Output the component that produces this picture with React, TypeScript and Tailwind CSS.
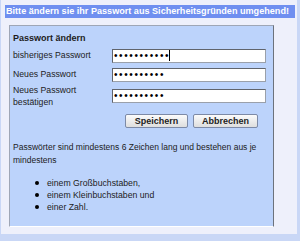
import React from 'react';

const font = { fontFamily: '"Liberation Sans", Arial, sans-serif' };

const PasswordField: React.FC<{ count: number; caret?: boolean }> = ({ count, caret }) => (
  <div
    role="textbox"
    className="flex h-[14px] w-[154px] items-center border border-[#9aa0aa] border-t-[#60646c] border-l-[#60646c] bg-white pl-[1px] text-[10px] leading-none tracking-[1.6px] text-black"
  >
    <span>{'•'.repeat(count)}</span>
    {caret && <span className="ml-[-1px] h-[11px] w-px bg-black" />}
  </div>
);

const App: React.FC = () => {
  const rules = ['einem Großbuchstaben,', 'einem Kleinbuchstaben und', 'einer Zahl.'];

  return (
    <div className="h-[241px] w-[300px] bg-[#c9d7f6] pl-[1px]" style={font}>
      <div className="flex h-[234px] w-[296px] flex-col bg-[#eef0fb] pt-[5px] pl-[4px] pr-[2px]">
        {/* Hinweis */}
        <div className="flex h-[13px] items-center whitespace-nowrap bg-[#6f8ff0] pl-[1px] text-[9.1px] font-bold leading-none text-white">
          Bitte ändern sie ihr Passwort aus Sicherheitsgründen umgehend!
        </div>

        <div className="mt-[7px] ml-[4px] h-[202px] w-[265px] border border-[#9ea6b6] border-r-[#6c727c] border-b-white bg-[#bcd3fb] pl-[3px] pt-[6px] text-[8.7px] text-[#1c1c1c]">
          <div className="text-[9px] font-bold leading-[12px]">Passwort ändern</div>

          <div className="mt-[2px] flex flex-col">
            <div className="flex h-[19px] items-center">
              <label className="w-[99px]">bisheriges Passwort</label>
              <PasswordField count={11} caret />
            </div>
            <div className="flex h-[19px] items-center">
              <label className="w-[99px]">Neues Passwort</label>
              <PasswordField count={10} />
            </div>
            <div className="flex h-[24px] items-center">
              <label className="w-[99px] leading-[12px]">
                Neues Passwort
                <br />
                bestätigen
              </label>
              <PasswordField count={10} />
            </div>
          </div>

          <div className="mt-[6px] flex gap-[5px] pl-[112px]">
            <button className="h-[14px] w-[63px] rounded-[2px] border border-[#7d8aa6] bg-gradient-to-b from-[#fbfbfb] to-[#dedede] text-[9px] font-bold leading-none text-[#222]">
              Speichern
            </button>
            <button className="h-[14px] w-[65px] rounded-[2px] border border-[#7d8aa6] bg-gradient-to-b from-[#fbfbfb] to-[#dedede] text-[9px] font-bold leading-none text-[#222]">
              Abbrechen
            </button>
          </div>

          <p className="mt-[13px] pr-[4px] text-[8.5px] leading-[13px]">
            Passwörter sind mindestens 6 Zeichen lang und bestehen aus je mindestens
          </p>

          <ul className="mt-[10px] flex flex-col pl-[22px]">
            {rules.map((r) => (
              <li key={r} className="flex items-center leading-[12px]">
                <span className="mr-[8px] h-[4px] w-[4px] rounded-full bg-black" />
                {r}
              </li>
            ))}
          </ul>
        </div>
      </div>
    </div>
  );
};

export default App;
